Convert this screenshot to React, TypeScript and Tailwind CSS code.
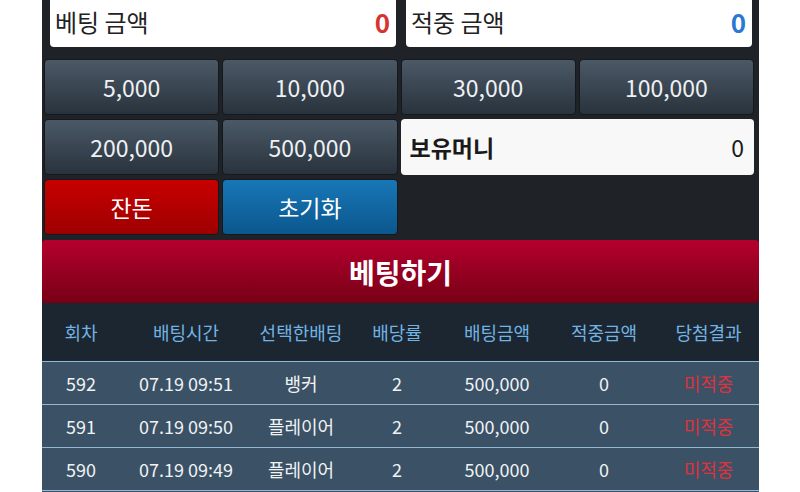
import React from "react";

const font = { fontFamily: '"Noto Sans CJK KR", "Noto Sans", sans-serif' };

const amounts = ["5,000", "10,000", "30,000", "100,000", "200,000", "500,000"];

const rows = [
  ["592", "07.19 09:51", "뱅커", "2", "500,000", "0", "미적중"],
  ["591", "07.19 09:50", "플레이어", "2", "500,000", "0", "미적중"],
  ["590", "07.19 09:49", "플레이어", "2", "500,000", "0", "미적중"],
];

const headers = ["회차", "배팅시간", "선택한배팅", "배당률", "배팅금액", "적중금액", "당첨결과"];
const cols = "grid grid-cols-[78px_132px_98px_94px_106px_108px_101px]";

function AmountButton({ label }: { label: string }) {
  return (
    <button className="h-[56px] rounded-[4px] border border-[#15191d] bg-gradient-to-b from-[#4b5967] to-[#29333d] text-[23px] text-[#eef1f4] flex items-center justify-center">
      {label}
    </button>
  );
}

export default function App() {
  return (
    <div className="w-[800px] h-[492px] bg-white overflow-hidden" style={font}>
      <div className="ml-[42px] w-[717px] h-[492px] bg-[#1f2328] flex flex-col">
        <div className="shrink-0 flex gap-[10px] pl-[8px] pr-[7px] -mt-[6px]">
          <div className="flex-1 h-[53px] bg-white rounded-[4px] flex items-center justify-between pl-[5px] pr-[6px] pt-[2px]">
            <span className="text-[24px] leading-none text-[#222]">베팅 금액</span>
            <span className="text-[26px] leading-none font-semibold text-[#d63333]">0</span>
          </div>
          <div className="flex-1 h-[53px] bg-white rounded-[4px] flex items-center justify-between pl-[5px] pr-[6px] pt-[2px]">
            <span className="text-[24px] leading-none text-[#222]">적중 금액</span>
            <span className="text-[26px] leading-none font-semibold text-[#2a78d2]">0</span>
          </div>
        </div>

        <div className="shrink-0 grid grid-cols-4 gap-x-[3px] gap-y-[4px] pl-[2px] pr-[5px] mt-[12px]">
          {amounts.map((a) => (
            <AmountButton key={a} label={a} />
          ))}
          <div className="col-span-2 h-[56px] rounded-[4px] bg-[#f8f8f8] flex items-center justify-between pl-[9px] pr-[10px]">
            <span className="text-[23px] font-bold text-[#1a1a1a]">보유머니</span>
            <span className="text-[23px] text-[#1a1a1a]">0</span>
          </div>
          <button className="h-[56px] rounded-[4px] border border-[#15191d] bg-gradient-to-b from-[#c80000] to-[#9e0000] text-[23px] text-white flex items-center justify-center">
            잔돈
          </button>
          <button className="h-[56px] rounded-[4px] border border-[#15191d] bg-gradient-to-b from-[#1877b6] to-[#0b578e] text-[23px] text-white flex items-center justify-center">
            초기화
          </button>
        </div>

        <button className="shrink-0 mt-[5px] h-[63px] w-full rounded-[4px] bg-gradient-to-b from-[#b5002e] to-[#780015] text-[28px] font-bold text-white flex items-center justify-center">
          베팅하기
        </button>

        <div className={`${cols} shrink-0 h-[58px] bg-[#1b2631] items-center`}>
          {headers.map((h) => (
            <div key={h} className="text-center text-[18px] text-[#72b3e3]">
              {h}
            </div>
          ))}
        </div>

        {rows.map((r) => (
          <div
            key={r[0]}
            className={`${cols} h-[43px] shrink-0 bg-[#3a5166] border-t border-[#93b8d4] items-center`}
          >
            {r.map((c, i) => (
              <div
                key={i}
                className={`text-center text-[18px] ${i === 6 ? "text-[#e0323c]" : "text-[#f0f2f4]"}`}
              >
                {c}
              </div>
            ))}
          </div>
        ))}
        <div className="h-[43px] shrink-0 bg-[#3a5166] border-t border-[#93b8d4]" />
      </div>
    </div>
  );
}
